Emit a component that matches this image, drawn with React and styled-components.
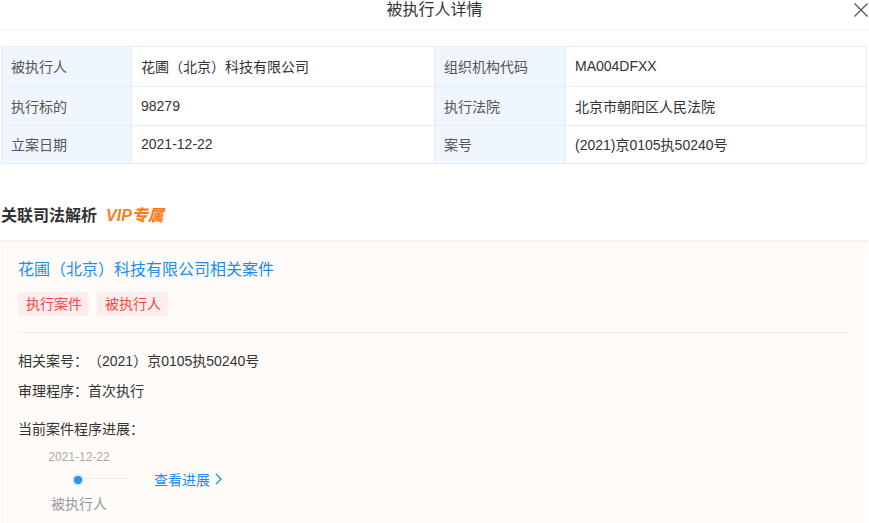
import React from 'react';
import styled, { createGlobalStyle } from 'styled-components';

const Global = createGlobalStyle`
  html, body { margin: 0; padding: 0; background: #fff; }
  body {
    font-family: "Liberation Sans", "Noto Sans CJK SC", sans-serif;
    color: #333;
    text-spacing-trim: space-all;
  }
  * { box-sizing: border-box; }
`;

const Page = styled.div`
  width: 869px;
  height: 523px;
  overflow: hidden;
  padding: 0 1px 0 1px;
`;

const Header = styled.header`
  position: relative;
  height: 30px;
  border-bottom: 1px solid #f6f6f6;
  text-align: center;
  margin: 0 -1px;
`;

const HeaderTitle = styled.h1`
  margin: 0;
  font-size: 16px;
  font-weight: 400;
  line-height: 20px;
  color: #333;
`;

const Close = styled.button`
  position: absolute;
  right: 0;
  top: 2px;
  width: 16px;
  height: 16px;
  padding: 0;
  border: 0;
  background: none;
  cursor: pointer;
`;

const Table = styled.div`
  display: grid;
  grid-template-columns: 130px 303px 131px 1fr;
  margin-top: 16px;
  width: 866px;
  border-top: 1px solid #e6edf5;
  border-left: 1px solid #e6edf5;
`;

const Cell = styled.div`
  height: ${p => p.$h}px;
  display: flex;
  align-items: center;
  padding-left: 9px;
  padding-bottom: 1px;
  font-size: 14px;
  color: ${p => (p.$label ? '#555' : '#333')};
  background: ${p => (p.$label ? '#eff6fe' : '#fff')};
  border-right: 1px solid #e6edf5;
  border-bottom: 1px solid #e6edf5;
`;

const SectionTitle = styled.h2`
  display: flex;
  align-items: center;
  gap: 9px;
  margin: 40px 0 0 0;
  font-size: 16px;
  font-weight: 700;
  line-height: 24px;
  color: #333;
`;

const Vip = styled.span`
  font-size: 16px;
  font-style: italic;
  font-weight: 900;
  color: #ff7d1f;
`;

const Card = styled.section`
  margin-top: 12px;
  width: 867px;
  min-height: 300px;
  background: #fffbf8;
  border-top: 2px solid #fdf1e8;
  border-left: 1px solid #fdf1e8;
  padding: 17px 16px 0 16px;
`;

const CardTitle = styled.a`
  display: block;
  font-size: 16px;
  line-height: 22px;
  color: #1c8cf0;
  text-decoration: none;
`;

const Tags = styled.div`
  display: flex;
  gap: 8px;
  margin-top: 11px;
`;

const Tag = styled.span`
  height: 24px;
  line-height: 24px;
  padding: 0 7px 0 8px;
  border-radius: 2px;
  font-size: 14px;
  color: #f4473f;
  background: #ffeded;
`;

const Divider = styled.div`
  height: 1px;
  margin: 16px 0 0 0;
  background: #f6ebe4;
`;

const Line = styled.p`
  margin: ${p => p.$mt}px 0 0 0;
  font-size: 14px;
  line-height: 20px;
  color: #333;
`;

const Progress = styled.div`
  display: flex;
  align-items: center;
  margin-top: 10px;
  padding-left: 13px;
`;

const Step = styled.div`
  width: 96px;
  display: flex;
  flex-direction: column;
  align-items: center;
`;

const StepDate = styled.span`
  font-size: 12px;
  line-height: 16px;
  color: #aaa;
`;

const Track = styled.div`
  position: relative;
  width: 100%;
  height: 12px;
  margin: 8px 0 9px;
  &::before {
    content: '';
    position: absolute;
    left: 48px;
    right: 0;
    top: 5px;
    height: 1px;
    background: #ececec;
  }
`;

const Dot = styled.span`
  position: absolute;
  left: 43px;
  top: 3px;
  width: 8px;
  height: 8px;
  border-radius: 50%;
  background: #2a8ff7;
  box-shadow: 0 0 0 2px #d8eafe;
`;

const StepName = styled.span`
  font-size: 14px;
  line-height: 20px;
  color: #999;
`;

const More = styled.a`
  display: flex;
  align-items: center;
  gap: 5px;
  margin-left: 27px;
  margin-top: -5px;
  font-size: 14px;
  color: #1c8cf0;
  text-decoration: none;
`;

const rows = [
  ['被执行人', '花圃（北京）科技有限公司', '组织机构代码', 'MA004DFXX', 40],
  ['执行标的', '98279', '执行法院', '北京市朝阳区人民法院', 39],
  ['立案日期', '2021-12-22', '案号', '(2021)京0105执50240号', 38],
];

export default function App() {
  return (
    <Page>
      <Global />
      <Header>
        <HeaderTitle>被执行人详情</HeaderTitle>
        <Close aria-label="关闭">
          <svg width="16" height="16" viewBox="0 0 16 16">
            <path d="M1.5 1.5 L14.5 14.5 M14.5 1.5 L1.5 14.5" stroke="#555" strokeWidth="1.2" fill="none" />
          </svg>
        </Close>
      </Header>

      <Table>
        {rows.map(([l1, v1, l2, v2, h]) => (
          <React.Fragment key={l1}>
            <Cell $label $h={h}>{l1}</Cell>
            <Cell $h={h}>{v1}</Cell>
            <Cell $label $h={h}>{l2}</Cell>
            <Cell $h={h}>{v2}</Cell>
          </React.Fragment>
        ))}
      </Table>

      <SectionTitle>
        关联司法解析
        <Vip>VIP专属</Vip>
      </SectionTitle>

      <Card>
        <CardTitle href="#">花圃（北京）科技有限公司相关案件</CardTitle>
        <Tags>
          <Tag>执行案件</Tag>
          <Tag>被执行人</Tag>
        </Tags>
        <Divider />
        <Line $mt={18}>相关案号：（2021）京0105执50240号</Line>
        <Line $mt={10}>审理程序：首次执行</Line>
        <Line $mt={18}>当前案件程序进展：</Line>
        <Progress>
          <Step>
            <StepDate>2021-12-22</StepDate>
            <Track>
              <Dot />
            </Track>
            <StepName>被执行人</StepName>
          </Step>
          <More href="#">
            查看进展
            <svg width="7" height="12" viewBox="0 0 7 12">
              <path d="M1 1 L6 6 L1 11" stroke="#1c8cf0" strokeWidth="1.3" fill="none" />
            </svg>
          </More>
        </Progress>
      </Card>
    </Page>
  );
}
